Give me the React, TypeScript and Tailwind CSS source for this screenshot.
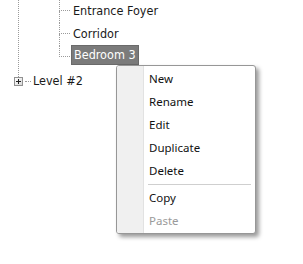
const treeFont = { fontFamily: '"DejaVu Sans Condensed", "DejaVu Sans", sans-serif', fontStretch: "condensed" } as const;

const menuItems = [
  { label: "New" },
  { label: "Rename" },
  { label: "Edit" },
  { label: "Duplicate" },
  { label: "Delete", separatorAfter: true },
  { label: "Copy" },
  { label: "Paste", disabled: true },
];

function Connector({ last }: { last?: boolean }) {
  return (
    <div className="flex flex-col w-[11px] h-full shrink-0">
      <div className="h-[11px] border-l border-b border-dotted border-[#9a9a9a]" />
      <div className={"flex-1 border-dotted border-[#9a9a9a] " + (last ? "" : "border-l")} />
    </div>
  );
}

function TreeRow({ label, last, selected }: { label: string; last?: boolean; selected?: boolean }) {
  return (
    <div className="flex h-[23px]">
      <Connector last={last} />
      {selected ? (
        <div className="ml-[1px] mt-[-1px] h-[20px] px-[2px] flex items-center bg-[#7b7b7b] border border-[#6a6a6a] text-white text-[12.5px]">
          {label}
        </div>
      ) : (
        <div className="ml-[3px] flex items-center text-[12.5px] text-[#1a1a1a]">{label}</div>
      )}
    </div>
  );
}

export default function App() {
  return (
    <div className="relative w-[303px] h-[264px] bg-white overflow-hidden">
      <div style={treeFont}>
        <div className="flex">
          <div className="w-[18px] shrink-0" />
          <div className="border-l border-dotted border-[#9a9a9a] pl-[40px] pb-[8px]">
            <TreeRow label="Entrance Foyer" />
            <TreeRow label="Corridor" />
            <TreeRow label="Bedroom 3" last selected />
          </div>
        </div>
        <div className="flex items-center h-[9px] pl-[14px]">
          <div className="w-[9px] h-[9px] border border-[#919191] bg-gradient-to-br from-white to-[#d8d8d8] flex items-center justify-center shrink-0">
            <svg width="7" height="7" viewBox="0 0 7 7">
              <path d="M1 3.5h5M3.5 1v5" stroke="#222" strokeWidth="1" shapeRendering="crispEdges" />
            </svg>
          </div>
          <div className="w-[6px] ml-[2px] border-t border-dotted border-[#9a9a9a]" />
          <div className="ml-[2px] text-[12.5px] text-[#1a1a1a] whitespace-nowrap">Level #2</div>
        </div>
      </div>

      {/* context menu */}
      <div
        className="absolute left-[116px] top-[65px] w-[140px] rounded-[3px] border border-[#979797] bg-white shadow-[3px_3px_4px_rgba(0,0,0,0.4)] overflow-hidden"
        style={{ fontFamily: '"Noto Sans", "Open Sans", sans-serif' }}
      >
        <div className="flex">
          <div className="w-[27px] bg-[#f0f0f0] border-r border-[#e2e2e2] shrink-0" />
          <div className="flex-1 pt-[1px] pb-[1px]">
            {menuItems.map((item) => (
              <div key={item.label}>
                <div className={"h-[23px] flex items-center pl-[5px] text-[11.5px] " + (item.disabled ? "text-[#9a9a9a]" : "text-[#111]")}>
                  {item.label}
                </div>
                {item.separatorAfter && (
                  <div className="h-[4px] flex items-center pl-[4px] pr-[4px]">
                    <div className="w-full border-t border-[#cfcfcf]" />
                  </div>
                )}
              </div>
            ))}
          </div>
        </div>
      </div>
    </div>
  );
}
